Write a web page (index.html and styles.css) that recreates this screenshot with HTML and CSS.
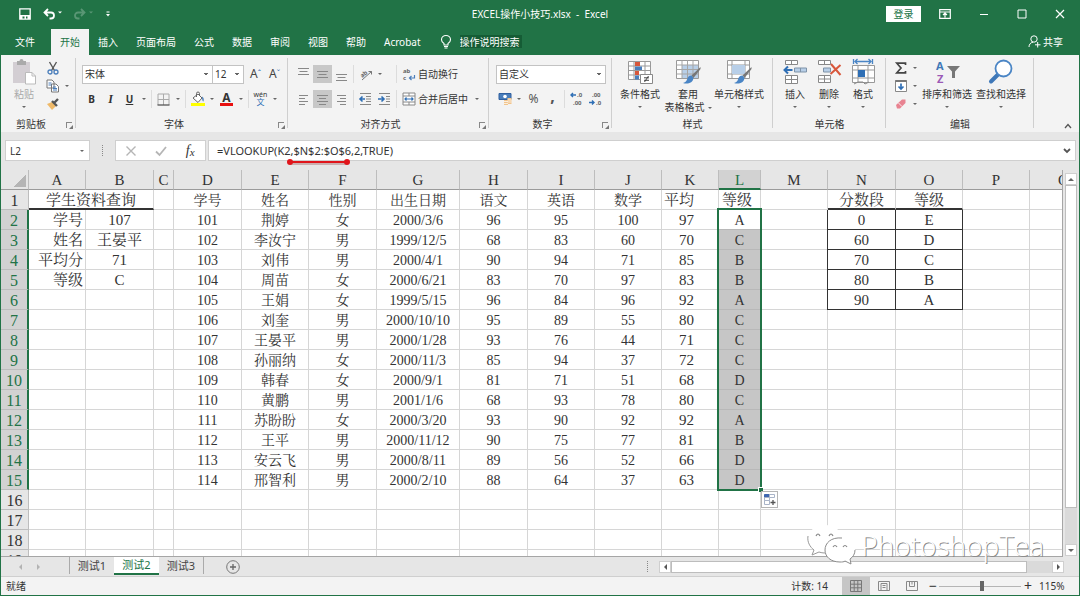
FILE: index.html
```html
<!DOCTYPE html>
<html lang="zh-CN">
<head>
<meta charset="utf-8">
<title>EXCEL操作小技巧.xlsx - Excel</title>
<link rel="stylesheet" href="styles.css">
</head>
<body>
<div class="app">
  <header class="titlebar">
    <div class="quick">
      <button aria-label="保存"><svg width="12" height="12" viewBox="0 0 12 12"><path d="M.8.8h10.4v10.4H.8z" fill="none" stroke="#fff" stroke-width="1.3"/><path d="M1 7h10v4H8.500V8.500H7V11H5.500V8.500H3.500V11H1z" fill="#fff"/></svg></button>
      <button aria-label="撤消"><svg width="18" height="12" viewBox="0 0 18 12"><path d="M5 1L1.500 4.500 5 8M2 4.500h6a3 3 0 0 1 0 6H6.500" fill="none" stroke="#fff" stroke-width="1.800"/><path d="M15 3.500h4l-2 2z" fill="#fff"/></svg></button>
      <button aria-label="恢复" class="dim"><svg width="20" height="12" viewBox="0 0 20 12"><path d="M8 1l3.500 3.500L8 8M11 4.500H5a3 3 0 0 0 0 6h1.500" fill="none" stroke="#fff" stroke-width="1.800"/><path d="M16 3.500h4l-2 2z" fill="#fff"/></svg></button>
      <button aria-label="自定义快速访问工具栏"><svg width="6" height="8" viewBox="0 0 6 8"><path d="M1.500 2h3" stroke="#fff"/><path d="M1 4h4L3 6.500z" fill="#fff"/></svg></button>
    </div>
    <h1>EXCEL操作小技巧.xlsx&nbsp; -&nbsp; Excel</h1>
    <div class="window">
      <button class="login">登录</button>
      <button aria-label="功能区显示选项"><svg width="12" height="10" viewBox="0 0 12 10"><path d="M.7.7h10.600v8.600H.7zM.7 3h10.600M6 8.500V4.500M4 6l2-2 2 2" fill="none" stroke="#fff" stroke-width="1.200"/></svg></button>
      <button aria-label="最小化"><svg width="10" height="10" viewBox="0 0 10 10"><path d="M1 5.500h8" stroke="#fff"/></svg></button>
      <button aria-label="最大化"><svg width="10" height="10" viewBox="0 0 10 10"><path d="M1 1h8v8H1z" fill="none" stroke="#fff"/></svg></button>
      <button aria-label="关闭"><svg width="10" height="10" viewBox="0 0 10 10"><path d="M1 1l8 8M9 1L1 9" stroke="#fff" stroke-width="1.200"/></svg></button>
    </div>
  </header>
  <nav class="tabs">
    <button class="file">文件</button><button class="on">开始</button><button>插入</button><button>页面布局</button><button>公式</button><button>数据</button><button>审阅</button><button>视图</button><button>帮助</button><button>Acrobat</button>
    <label class="tell"><svg width="12" height="14" viewBox="0 0 12 14"><path d="M4 10V8.500C2.500 7.500 1.500 6.500 1.500 4.800a4.500 4.300 0 0 1 9 0C10.500 6.500 9.500 7.500 8 8.500V10zM4 11.500h4M4.500 13h3" fill="none" stroke="#fff" stroke-width="1.100"/></svg><input value="操作说明搜索" aria-label="操作说明搜索"></label>
    <button class="share"><svg width="13" height="13" viewBox="0 0 13 13"><circle cx="6" cy="4" r="3.200" fill="none" stroke="#fff"/><path d="M1 12c0-2.500 1.500-4.500 4-4.800M7 9.800h5.500M9.700 7v5.500" fill="none" stroke="#fff"/></svg>共享</button>
  </nav>

  <section class="ribbon">
    <div class="group g-clip">
      <div class="body">
        <button class="big off"><svg width="26" height="26" viewBox="0 0 26 26"><path d="M2 3h17v21H2z" fill="#d3ced3"/><path d="M6 2h2.500a2 2 0 0 1 4 0H15v4H6z" fill="#aaa"/><path d="M14.500 13.500H21l3.500 3.500v8h-10z" fill="#fff" stroke="#bbb"/><path d="M21 13.500V17h3.500" fill="none" stroke="#bbb"/></svg><span>粘贴</span><i class="car"></i></button>
        <div class="stack">
          <div class="row"><button class="ib" aria-label="剪切"><svg width="14" height="14" viewBox="0 0 14 14"><path d="M3.500 1l5 8.500M10.500 1l-5 8.500" stroke="#555" stroke-width="1.400"/><circle cx="4" cy="11" r="2" fill="none" stroke="#4a7ebb" stroke-width="1.300"/><circle cx="10" cy="11" r="2" fill="none" stroke="#4a7ebb" stroke-width="1.300"/></svg></button></div>
          <div class="row"><button class="ib" aria-label="复制"><svg width="14" height="14" viewBox="0 0 14 14"><path d="M1 1h5l2 2v6H1zM5.500 5H10l2.500 2.500V13h-7z" fill="#fff" stroke="#777"/><path d="M2.500 4h3M2.500 6h3M7 8h3M7 9.500h4M7 11h4" stroke="#4a7ebb"/></svg></button><button class="dd" aria-label="复制选项"><i class="car"></i></button></div>
          <div class="row"><button class="ib" aria-label="格式刷"><svg width="14" height="14" viewBox="0 0 14 14"><path d="M1 7l5-2 4 4-4 4z" fill="#efb968"/><path d="M6 4l5 5M8.500 5.500L12 2" stroke="#555" stroke-width="2.400"/></svg></button></div>
        </div>
      </div>
      <div class="name">剪贴板<button class="launch" aria-label="剪贴板选项"></button></div>
    </div>

    <div class="group g-font">
      <div class="body rows">
        <div class="row"><select class="sel wide" aria-label="字体"><option>宋体</option></select><select class="sel size" aria-label="字号"><option>12</option></select><button class="ib grow" aria-label="增大字号">A<sup>ˆ</sup></button><button class="ib grow" aria-label="减小字号">A<sup>ˇ</sup></button></div>
        <div class="row"><button class="ib b">B</button><button class="ib it">I</button><button class="ib u">U</button><button class="dd" aria-label="下划线选项"><i class="car"></i></button><i class="sep"></i>
          <button class="ib" aria-label="边框"><svg width="13" height="13" viewBox="0 0 13 13"><path d="M1 1h11v11M1 1v11M6.500 1v11M1 6.500h11" fill="none" stroke="#aaa"/><path d="M.5 12h12" stroke="#555" stroke-width="1.300"/></svg></button><button class="dd" aria-label="边框选项"><i class="car"></i></button><i class="sep"></i>
          <button class="ib" aria-label="填充颜色"><svg width="14" height="14" viewBox="0 0 14 14"><path d="M2 6l5-4 4 4-4 4.500z" fill="#fff" stroke="#666"/><path d="M5.500 5V1.500a1.500 1.500 0 0 1 3 0V4" fill="none" stroke="#666"/><path d="M11 4.500c2 1 2 3 1.500 5-1 0-1.500-2-1.500-5z" fill="#4a7ebb"/><path d="M0 11h14v3H0z" fill="#ffff00"/></svg></button><button class="dd" aria-label="填充颜色选项"><i class="car"></i></button>
          <button class="ib fc" aria-label="字体颜色">A</button><button class="dd" aria-label="字体颜色选项"><i class="car"></i></button><i class="sep"></i>
          <button class="ib wen" aria-label="显示拼音"><span>wén</span><b>文</b></button><button class="dd" aria-label="拼音选项"><i class="car"></i></button></div>
      </div>
      <div class="name">字体<button class="launch" aria-label="字体选项"></button></div>
    </div>

    <div class="group g-align">
      <div class="body rows">
        <div class="row">
          <button class="ib" aria-label="顶端对齐"><svg class="ln" width="13" height="13" viewBox="0 0 13 13"><path d="M1 .5h11M2.500 3.500h8M1 6.500h11"/></svg></button><button class="ib sel-on" aria-label="垂直居中"><svg class="ln" width="13" height="13" viewBox="0 0 13 13"><path d="M1 3.500h11M2.500 6.500h8M1 9.500h11"/></svg></button><button class="ib" aria-label="底端对齐"><svg class="ln" width="13" height="13" viewBox="0 0 13 13"><path d="M1 6.500h11M2.500 9.500h8M1 12.500h11"/></svg></button><i class="sep"></i>
          <span class="pair"><button class="ib" aria-label="方向"><svg width="14" height="14" viewBox="0 0 14 14"><path d="M3 13L12.500 4.500M12.500 4.500H9.500M12.500 4.500v3" fill="none" stroke="#777"/><text x="1" y="9" class="ab" transform="rotate(-40 5 7)">ab</text></svg></button><button class="dd" aria-label="方向选项"><i class="car"></i></button></span><i class="sep"></i>
          <button class="txt"><svg width="14" height="14" viewBox="0 0 14 14"><text x="1" y="6" class="ab">ab</text><text x="1" y="13" class="ab">c</text><path d="M12.500 8v3H7.500M9.500 9l-2 2 2 2" fill="none" stroke="#4a7ebb" stroke-width="1.200"/></svg>自动换行</button>
        </div>
        <div class="row">
          <button class="ib" aria-label="左对齐"><svg class="ln" width="11" height="11" viewBox="0 0 11 11"><path d="M1 1.500h9M1 4.500h6M1 7.500h9M1 10.500h6"/></svg></button><button class="ib sel-on" aria-label="居中"><svg class="ln" width="11" height="11" viewBox="0 0 11 11"><path d="M0 1.500h11M2 4.500h7M0 7.500h11M2 10.500h7"/></svg></button><button class="ib" aria-label="右对齐"><svg class="ln" width="11" height="11" viewBox="0 0 11 11"><path d="M1 1.500h9M4 4.500h6M1 7.500h9M4 10.500h6"/></svg></button><i class="sep"></i>
          <span class="pair"><button class="ib" aria-label="减少缩进"><svg width="13" height="12" viewBox="0 0 13 12"><path d="M1 .5h11M7 3.500h5M7 6h5M7 8.500h5M1 11.500h11" stroke="#888"/><path d="M6 6H1M3.500 3.500L1 6l2.500 2.500" fill="none" stroke="#2f6fb5" stroke-width="1.600"/></svg></button><button class="ib" aria-label="增加缩进"><svg width="13" height="12" viewBox="0 0 13 12"><path d="M1 .5h11M8 3.500h4M8 6h4M8 8.500h4M1 11.500h11" stroke="#888"/><path d="M0 6h6M3.500 3.500L6 6 3.500 8.500" fill="none" stroke="#2f6fb5" stroke-width="1.600"/></svg></button></span><i class="sep"></i>
          <button class="txt"><svg width="14" height="14" viewBox="0 0 14 14"><path d="M1 1h12v12H1zM1 4h12M1 10h12M7 1v3M7 10v3" fill="#fff" stroke="#888"/><path d="M3 7h8M4.500 5.500L3 7l1.500 1.500M9.500 5.500L11 7 9.500 8.500" fill="none" stroke="#2f6fb5" stroke-width="1.200"/></svg>合并后居中</button><button class="dd last" aria-label="合并选项"><i class="car"></i></button>
        </div>
      </div>
      <div class="name">对齐方式<button class="launch" aria-label="对齐选项"></button></div>
    </div>

    <div class="group g-num">
      <div class="body rows">
        <div class="row"><select class="sel fmt" aria-label="数字格式"><option>自定义</option></select></div>
        <div class="row"><button class="ib" aria-label="会计数字格式"><svg width="14" height="14" viewBox="0 0 14 14"><path d="M1 1.500h12v6H1z" fill="#4a7ebb" stroke="#2f5f9f"/><circle cx="7" cy="4.500" r="1.800" fill="#fff"/><path d="M6 8h4v5H6zM9.500 6h4v6h-4z" fill="#f1c48b"/><path d="M6 9.500h4M6 11.500h4M9.500 8h4M9.500 10h4" stroke="#fff" stroke-width=".7"/></svg></button><button class="dd" aria-label="货币选项"><i class="car"></i></button><button class="ib pct">%</button><button class="ib comma">,</button><i class="sep"></i>
          <button class="ib" aria-label="增加小数位数"><svg width="13" height="14" viewBox="0 0 13 14"><path d="M6 3H1M3 1L1 3l2 2" fill="none" stroke="#2f6fb5" stroke-width="1.400"/><text x="7" y="5" class="ab">.0</text><text x="3" y="13" class="ab">.00</text></svg></button><button class="ib" aria-label="减少小数位数"><svg width="13" height="14" viewBox="0 0 13 14"><path d="M0 10.500h5M3 8.500l2 2-2 2" fill="none" stroke="#2f6fb5" stroke-width="1.400"/><text x="3" y="5" class="ab">.00</text><text x="7" y="13" class="ab">.0</text></svg></button></div>
      </div>
      <div class="name">数字<button class="launch" aria-label="数字选项"></button></div>
    </div>

    <div class="group g-style">
      <div class="body">
        <button class="big"><svg width="26" height="26" viewBox="0 0 26 26"><path d="M1.500 2.500h22v18h-22zM1.500 7h22M1.500 11.500h22M1.500 16h22M7 2.500v18M18 2.500v18" fill="#fff" stroke="#999"/><path d="M8 3h5v4H8zM8 12h4v4H8z" fill="#d8573b"/><path d="M8 7.500h7V11H8zM8 16.500h4v4H8z" fill="#4a7ebb"/><path d="M13.500 15.500h12v9h-12z" fill="#fff" stroke="#888"/><path d="M17 18.800h5M17 21.300h5M21.500 17l-4 6" stroke="#444"/></svg><span>条件格式</span><i class="car"></i></button>
        <button class="big"><svg width="26" height="26" viewBox="0 0 26 26"><path d="M1.500 1.500h22v18h-22z" fill="#fff" stroke="#999"/><path d="M7 6h16v13H7z" fill="#b8cfe8"/><path d="M1.500 6h22M1.500 10.500h22M1.500 15h22M7 1.500v18M12.500 1.500v18M18 1.500v18" stroke="#a5a5a5"/><path d="M25.500 8l-9 8.500 2 2.500 7-9z" fill="#777"/><path d="M16.500 16.500c-3 0-4 2-4.500 4-.5 2-2 3-4 3.500 4.500 1.500 10 0 10.500-5z" fill="#4a85c5"/></svg><span>套用<br>表格格式<i class="car"></i></span></button>
        <button class="big"><svg width="26" height="26" viewBox="0 0 26 26"><path d="M1.500 1.500h22v18h-22zM1.500 6h22M1.500 15h22M6 1.500v18M19 1.500v18" fill="#fff" stroke="#999"/><path d="M6 6h13v9H6z" fill="#b8cfe8"/><path d="M25.500 8l-9 8.500 2 2.500 7-9z" fill="#777"/><path d="M16.500 16.500c-3 0-4 2-4.500 4-.5 2-2 3-4 3.500 4.500 1.500 10 0 10.500-5z" fill="#4a85c5"/></svg><span>单元格样式</span><i class="car"></i></button>
      </div>
      <div class="name">样式</div>
    </div>

    <div class="group g-cell">
      <div class="body">
        <button class="big"><svg width="26" height="26" viewBox="0 0 26 26"><path d="M3.500 1.500h12v4h-12zM9.500 1.500v4M3.500 16.500h12v8h-12zM3.500 20.500h12M9.500 16.500v8" fill="#fff" stroke="#888"/><path d="M12.500 9h12v4h-12zM18.500 9v4" fill="#b8cfe8" stroke="#7f93a8"/><path d="M10.500 11H2.500M6 7.500L2.500 11 6 14.500" fill="none" stroke="#2f6fb5" stroke-width="2"/></svg><span>插入</span><i class="car"></i></button>
        <button class="big"><svg width="26" height="26" viewBox="0 0 26 26"><path d="M2.500 1.500h12v4h-12zM8.500 1.500v4M2.500 16.500h12v7h-12zM2.500 20h12M8.500 16.500v7" fill="#fff" stroke="#888"/><path d="M7.500 9h7v4h-7z" fill="#b8cfe8" stroke="#7f93a8"/><path d="M15 5l9.500 11M24.500 6L14.500 15" stroke="#d8573b" stroke-width="2"/></svg><span>删除</span><i class="car"></i></button>
        <button class="big"><svg width="26" height="26" viewBox="0 0 26 26"><path d="M2.500 6.500h22v17h-22zM2.500 11h22M2.500 19h22M8 6.500v17M18 6.500v17" fill="#fff" stroke="#999"/><path d="M8 11h7v7H8z" fill="#2f6fb5"/><path d="M5 2.500h16M7.500 0L5 2.500 7.500 5M18.500 0L21 2.500 18.500 5M3.500 0v5M22.500 0v5" fill="none" stroke="#4a85c5" stroke-width="1.300"/><path d="M4 25l4-2h5l2 2 4-2" fill="none" stroke="#888"/></svg><span>格式</span><i class="car"></i></button>
      </div>
      <div class="name">单元格</div>
    </div>

    <div class="group g-edit">
      <div class="body">
        <div class="stack">
          <div class="row"><button class="ib" aria-label="自动求和"><svg width="12" height="12" viewBox="0 0 12 12"><path d="M10.500 3V1.200H1.800L6 6l-4.200 4.800h8.700V9" fill="none" stroke="#444" stroke-width="1.700"/></svg></button><button class="dd" aria-label="求和选项"><i class="car"></i></button></div>
          <div class="row"><button class="ib" aria-label="填充"><svg width="12" height="12" viewBox="0 0 12 12"><path d="M.5.5h11v11H.5z" fill="#fff" stroke="#888"/><path d="M.5 1h11" stroke="#777" stroke-width="2"/><path d="M6 3.500V9M3.500 6.500L6 9l2.500-2.500" fill="none" stroke="#2f6fb5" stroke-width="1.700"/></svg></button><button class="dd" aria-label="填充选项"><i class="car"></i></button></div>
          <div class="row"><button class="ib" aria-label="清除"><svg width="12" height="12" viewBox="0 0 12 12"><path d="M1 7l6-5.500h3.500v3.500L5 10.500H2z" fill="#e88391"/><path d="M3.500 5l3.500 3.500" stroke="#fff" stroke-width=".8"/></svg></button><button class="dd" aria-label="清除选项"><i class="car"></i></button></div>
        </div>
        <button class="big"><svg width="26" height="26" viewBox="0 0 26 26"><text x="2" y="11" class="az a">A</text><text x="3" y="24" class="az z">Z</text><path d="M13 7h13l-5 5.500V19h-3v-6.500z" fill="#777"/></svg><span>排序和筛选</span><i class="car"></i></button>
        <button class="big"><svg width="26" height="26" viewBox="0 0 26 26"><path d="M10.500 15L3 22.500" stroke="#3f78b8" stroke-width="4" stroke-linecap="round"/><circle cx="15.500" cy="9.500" r="8" fill="#fff" stroke="#4a85c5" stroke-width="1.800"/></svg><span>查找和选择</span><i class="car"></i></button>
      </div>
      <div class="name">编辑</div>
    </div>
    <button class="collapse" aria-label="折叠功能区"><svg width="8" height="6" viewBox="0 0 8 6"><path d="M1 5l3-3.500L7 5" fill="none" stroke="#555" stroke-width="1.300"/></svg></button>
  </section>

  <section class="formula">
    <label class="namebox"><input value="L2" aria-label="名称框"><i class="car"></i></label>
    <i class="grip"></i>
    <div class="fxbox"><button aria-label="取消"><svg width="12" height="12" viewBox="0 0 12 12"><path d="M1.500 1.500l9 9M10.500 1.500l-9 9" stroke="#b5b5b5" stroke-width="1.400"/></svg></button><button aria-label="输入"><svg width="12" height="12" viewBox="0 0 12 12"><path d="M1 6.500L4.500 10 11 2" fill="none" stroke="#b5b5b5" stroke-width="1.800"/></svg></button><button class="fx" aria-label="插入函数">f<small>x</small></button></div>
    <label class="fbox"><input value="=VLOOKUP(K2,$N$2:$O$6,2,TRUE)" aria-label="编辑栏"><svg width="8" height="6" viewBox="0 0 8 6"><path d="M1 1l3 3 3-3" fill="none" stroke="#555" stroke-width="1.800"/></svg></label>
    <svg class="mark" width="66" height="12" viewBox="0 0 66 12"><path d="M4 7h57" stroke="#9a4a4a" stroke-width="2" opacity=".35"/><path d="M4 5h57" stroke="#e0151b" stroke-width="2"/><circle cx="4" cy="5" r="3" fill="#e0151b"/><circle cx="61" cy="5" r="3" fill="#e0151b"/></svg>
  </section>

  <main class="sheet">
    <div class="grid">
      <table>
        <colgroup><col class="c28"><col class="c57"><col class="c68"><col class="c20"><col class="c68"><col class="c67"><col class="c68"><col class="c83"><col class="c68"><col class="c67"><col class="c67"><col class="c57"><col class="c42"><col class="c67"><col class="c68"><col class="c67"><col class="c67"><col></colgroup>
        <thead><tr><th class="corner"><th>A<th>B<th>C<th>D<th>E<th>F<th>G<th>H<th>I<th>J<th>K<th class="hot">L<th>M<th>N<th>O<th>P<th>Q</tr></thead>
        <tbody>
        <tr><th>1<td colspan="2" class="lg heavy">学生资料查询<td><td>学号<td>姓名<td>性别<td>出生日期<td>语文<td>英语<td>数学<td class="k">平均<td class="l1">等级<td><td class="lg n1">分数段<td class="lg n1">等级<td><td></tr>
        <tr class="s"><th>2<td class="r">学号<td class="lg">107<td><td>101<td>荆婷<td>女<td>2000/3/6<td>96<td>95<td>100<td class="k">97<td class="l first">A<span class="range"></span><td><td class="n">0<td class="n">E<td><td></tr>
        <tr class="s"><th>3<td class="r">姓名<td class="lg">王晏平<td><td>102<td>李汝宁<td>男<td>1999/12/5<td>68<td>83<td>60<td class="k">70<td class="l">C<td><td class="n">60<td class="n">D<td><td></tr>
        <tr class="s"><th>4<td class="r">平均分<td class="lg">71<td><td>103<td>刘伟<td>男<td>2000/4/1<td>90<td>94<td>71<td class="k">85<td class="l">B<td><td class="n">70<td class="n">C<td><td></tr>
        <tr class="s"><th>5<td class="r">等级<td class="lg">C<td><td>104<td>周苗<td>女<td>2000/6/21<td>83<td>70<td>97<td class="k">83<td class="l">B<td><td class="n">80<td class="n">B<td><td></tr>
        <tr class="s"><th>6<td><td><td><td>105<td>王娟<td>女<td>1999/5/15<td>96<td>84<td>96<td class="k">92<td class="l">A<td><td class="n">90<td class="n">A<td><td></tr>
        <tr class="s"><th>7<td><td><td><td>106<td>刘奎<td>男<td>2000/10/10<td>95<td>89<td>55<td class="k">80<td class="l">C<td><td><td><td><td></tr>
        <tr class="s"><th>8<td><td><td><td>107<td>王晏平<td>男<td>2000/1/28<td>93<td>76<td>44<td class="k">71<td class="l">C<td><td><td><td><td></tr>
        <tr class="s"><th>9<td><td><td><td>108<td>孙丽纳<td>女<td>2000/11/3<td>85<td>94<td>37<td class="k">72<td class="l">C<td><td><td><td><td></tr>
        <tr class="s"><th>10<td><td><td><td>109<td>韩春<td>女<td>2000/9/1<td>81<td>71<td>51<td class="k">68<td class="l">D<td><td><td><td><td></tr>
        <tr class="s"><th>11<td><td><td><td>110<td>黄鹏<td>男<td>2001/1/6<td>68<td>93<td>78<td class="k">80<td class="l">C<td><td><td><td><td></tr>
        <tr class="s"><th>12<td><td><td><td>111<td>苏盼盼<td>女<td>2000/3/20<td>93<td>90<td>92<td class="k">92<td class="l">A<td><td><td><td><td></tr>
        <tr class="s"><th>13<td><td><td><td>112<td>王平<td>男<td>2000/11/12<td>90<td>75<td>77<td class="k">81<td class="l">B<td><td><td><td><td></tr>
        <tr class="s"><th>14<td><td><td><td>113<td>安云飞<td>男<td>2000/8/11<td>89<td>56<td>52<td class="k">66<td class="l">D<td><td><td><td><td></tr>
        <tr class="s"><th>15<td><td><td><td>114<td>邢智利<td>男<td>2000/2/10<td>88<td>64<td>37<td class="k">63<td class="l">D<button class="autofill" aria-label="自动填充选项"><svg width="12" height="12" viewBox="0 0 12 12"><path d="M.5.5h5v3h-5z" fill="#3f66b0" stroke="#3f66b0"/><path d="M5.500.5h5v3h-5zM.5 3.500h5v3h-5zM.5 6.500h5v4h-5z" fill="#fff" stroke="#a9b4c8"/><path d="M9 6v5M6.500 8.500h5" stroke="#555" stroke-width="1.300"/></svg></button><td><td><td><td><td></tr>
        <tr><th>16<td><td><td><td><td><td><td><td><td><td><td><td><td><td><td><td><td></tr>
        <tr><th>17<td><td><td><td><td><td><td><td><td><td><td><td><td><td><td><td><td></tr>
        <tr><th>18<td><td><td><td><td><td><td><td><td><td><td><td><td><td><td><td><td></tr>
        <tr><th>19<td><td><td><td><td><td><td><td><td><td><td><td><td><td><td><td><td></tr>
        </tbody>
      </table>
    </div>
    <div class="vscroll"><button aria-label="向上滚动"><i class="tri up"></i></button><div class="thumb"></div><div class="track"></div><button aria-label="向下滚动"><i class="tri down"></i></button></div>
    <div class="watermark">
      <svg width="50" height="42" viewBox="0 0 50 42"><path d="M18 1C8 1 1 7 1 15c0 5 3 8 6 11l-2 5 7-3c3 1 6 1 9 1 12-2 15-8 14-15C34 6 27 1 18 1z" fill="#fff"/><path d="M1 12c-1 6 2 11 6 14l-2 5 7-3c3 1 5 1 8 1" fill="none" stroke="#999"/><path d="M33 14c-9 0-15 5-15 12s6 12 15 12c2 0 4 0 5-1l6 3-1-5c3-2 5-5 5-9 0-7-6-12-15-12z" fill="#fff"/><path d="M35 14c-11-1-17 5-17 12s6 12 15 12c2 0 4 0 5-1l6 3-1-5c3-2 5-5 5-9" fill="none" stroke="#8c8c8c"/><path d="M9 12q2-4 4 0M22 12q2-4 4 0M26 23q2-3 4 0M36 23q2-3 4 0" fill="none" stroke="#888" stroke-width="1.200"/></svg>
      <span>PhotoshopTea</span>
    </div>
  </main>

  <nav class="sheets">
    <div class="arrows"><button aria-label="上一张"><i class="tri left"></i></button><button aria-label="下一张"><i class="tri right"></i></button></div>
    <button class="tab first">测试1</button><button class="tab cur">测试2</button><button class="tab third">测试3</button>
    <button class="add" aria-label="新工作表"><svg width="14" height="14" viewBox="0 0 14 14"><circle cx="7" cy="7" r="6.300" fill="none" stroke="#777"/><path d="M7 4v6M4 7h6" stroke="#666" stroke-width="1.300"/></svg></button>
    <div class="hscroll"><i class="grip"></i><button aria-label="向左滚动"><i class="tri left"></i></button><div class="thumb"></div><div class="track"></div><button aria-label="向右滚动"><i class="tri right"></i></button></div>
  </nav>

  <footer class="status">
    <span>就绪</span>
    <span class="count">计数: 14</span>
    <button class="view on" aria-label="普通"><svg width="12" height="12" viewBox="0 0 12 12"><path d="M.5.5h11v11H.5zM.5 4.200h11M.5 7.800h11M4.200.5v11M7.800.5v11" fill="none" stroke="#777"/></svg></button><button class="view" aria-label="页面布局"><svg width="12" height="12" viewBox="0 0 12 12"><path d="M.5 1.500h11v9H.5zM3 3.500h6v7H3zM4.500 5.500h3M4.500 7.500h3" fill="none" stroke="#888"/></svg></button><button class="view" aria-label="分页预览"><svg width="12" height="12" viewBox="0 0 12 12"><path d="M.5 1.500h11v9H.5zM3.500 1.500v5h5v-5M6 1.500v3" fill="none" stroke="#888"/></svg></button>
    <button class="zoom" aria-label="缩小">−</button><input type="range" min="0" max="100" value="53" aria-label="显示比例"><button class="zoom" aria-label="放大">+</button><span class="pc">115%</span>
  </footer>
</div>
</body>
</html>
```

FILE: styles.css
```css
* { box-sizing: border-box; }
body {
  margin: 0;
  font: 10px/14px "Noto Sans", "Noto Sans CJK SC", sans-serif;
  color: #333;
}
button, input, select { font: inherit; color: inherit; border: 0; padding: 0; margin: 0; background: none; border-radius: 0; min-width: 0; }
button { display: flex; align-items: center; justify-content: center; white-space: nowrap; }
svg { display: block; flex: none; overflow: visible; }
i { font-style: normal; }
.app {
  display: flex;
  flex-direction: column;
  height: 100vh;
  background: #e6e6e6;
  border: 1px solid #217346;
  border-top: 0;
  overflow: hidden;
}

/* title bar */
.titlebar {
  display: grid;
  grid-template-columns: 1fr auto 1fr;
  align-items: center;
  height: 28px;
  background: #217346;
  color: #fff;
}
.titlebar h1 { margin: 0; font-size: 10px; font-weight: 400; }
.quick { display: flex; align-items: center; gap: 12px; padding-left: 18px; }
.dim { opacity: .25; }
.window { display: flex; align-items: center; justify-content: flex-end; gap: 28px; padding-right: 14px; }
.login { width: 35px; height: 16px; background: #fff; color: #217346; margin-right: -10px; }

.tabs { display: flex; height: 27px; background: #217346; color: #fff; }
.tabs button { padding: 0 9px; }
.tabs .file { margin: 0 7px 0 5px; }
.tabs .on { background: #f3f3f3; color: #217346; margin-top: 1px; }
.tell { display: flex; align-items: center; gap: 8px; padding-left: 10px; }
.tell input { width: 62px; height: 13px; background: #155c35; color: #fff; }
.tabs .share { margin-left: auto; gap: 2px; padding-right: 16px; }

/* ribbon */
.ribbon { display: flex; height: 77px; background: #f3f3f3; }
.group { display: flex; flex-direction: column; position: relative; flex: none; }
.group::after { content: ""; position: absolute; right: 0; top: 3px; bottom: 4px; width: 1px; background: #cfcfcf; }
.body { display: flex; height: 61px; padding-top: 4px; }
.body.rows { flex-direction: column; padding: 7px 0 0 6px; gap: 1px; }
.row { display: flex; align-items: center; height: 24px; }
.stack { display: flex; flex-direction: column; }
.stack .row { height: 18px; }
.name { position: relative; text-align: center; line-height: 16px; }
.launch { position: absolute; right: 4px; top: 6px; width: 6px; height: 6px; border: 1px solid #888; border-right: 0; border-bottom: 0; }
.launch::after { content: ""; position: absolute; right: -1px; bottom: -1px; border: 2px solid #777; border-left-color: transparent; border-top-color: transparent; }
.g-clip { width: 75px; }
.g-font { width: 212px; }
.g-align { width: 201px; }
.g-align .name, .g-num .name { padding-right: 16px; }
.g-font .name { padding-right: 16px; }
.g-clip .name { padding-right: 15px; }
.g-num { width: 123px; }
.g-style { width: 161px; }
.g-cell { width: 113px; }
.g-edit { width: 148px; }
.car { display: inline-block; flex: none; border: 2px solid transparent; border-top-color: #666; border-bottom: 0; vertical-align: middle; }
.ib { width: 19px; height: 18px; flex: none; }
.dd { width: 10px; height: 18px; flex: none; }
.sep { width: 1px; height: 18px; margin: 0 2px; background: #dcdcdc; flex: none; }
.sel-on { background: #c8c8c8; }
.pair { display: flex; width: 38px; }
.txt { gap: 2px; padding-left: 3px; }
.last { margin-left: 4px; }
.ln { stroke: #888; fill: none; }
.ab { font: bold 6px "Noto Sans", sans-serif; fill: #666; }
.az { font: bold 11px "Noto Sans", sans-serif; }
.az.a { fill: #3f78b8; }
.az.z { fill: #9b59b6; }
.sel {
  height: 19px;
  border: 1px solid #c3c3c3;
  padding-left: 2px;
  appearance: none;
  background: linear-gradient(#666, #666) right 5px top 8px / 2px 1px no-repeat, linear-gradient(#666, #666) right 4px top 7px / 4px 1px no-repeat, #fff;
}
.wide { width: 131px; }
.size { width: 32px; margin-left: -1px; }
.fmt { width: 110px; margin-left: 1px; }
.grow { font-size: 12px; color: #444; }
.size + .grow { margin-left: 2px; }
.grow sup { font-size: 8px; line-height: 8px; color: #2f6fb5; }
.b { font-weight: 700; }
.it { font-style: italic; font-weight: 700; font-family: "Liberation Serif", serif; font-size: 12px; }
.u { text-decoration: underline; font-weight: 700; }
.fc { font-size: 12px; font-weight: 700; line-height: 11px; }
.ib.fc { width: 13px; height: 14px; margin: 0 3px; border-bottom: 3px solid #e81010; }
.wen { flex-direction: column; font-size: 7px; line-height: 6px; }
.wen b { font-size: 8px; line-height: 8px; color: #2f6fb5; font-weight: 400; }
.pct { font-size: 12px; color: #555; }
.comma { font-size: 16px; font-weight: 700; line-height: 8px; padding-bottom: 6px; color: #555; }
.big { flex-direction: column; justify-content: flex-start; line-height: 13px; }
.big span { margin-top: 3px; }
.big > .car { margin-top: 5px; }
.big span .car { margin-left: 3px; }
.off { color: #aaa; width: 38px; margin-left: 4px; }
.g-style .body { padding-left: 4px; }
.g-style .big { width: 48px; }
.g-style .big:last-child { width: 54px; }
.g-cell .body { padding-left: 5px; }
.g-cell .big { width: 34px; }
.g-edit .body { padding-left: 5px; }
.g-edit .big { width: 54px; }
.g-edit .stack { width: 29px; }
.collapse { margin: auto 7px 3px auto; }

/* formula bar */
.formula { display: flex; position: relative; height: 38px; padding: 8px 3px 9px 4px; }
.formula > label, .fxbox { display: flex; align-items: center; background: #fff; border: 1px solid #cfcfcf; height: 21px; }
.formula input { flex: 1; width: 0; }
.namebox { width: 85px; padding: 0 5px 0 4px; }
.grip { width: 1px; height: 11px; margin: 5px 12px; border-left: 1px dotted #888; }
.fxbox { width: 91px; margin-right: 2px; }
.fxbox button { flex: 1; }
.fx { font: italic 14px "Liberation Serif", serif; }
.fx small { font-size: 11px; padding-top: 3px; }
.fbox { flex: 1; padding: 0 4px 0 8px; font-size: 11px; }
.mark { position: absolute; left: 285px; top: 25px; }

/* grid */
.sheet { flex: 1; display: flex; min-height: 0; position: relative; }
.grid { flex: 1; overflow: hidden; border-right: 1px solid #a6a6a6; border-bottom: 1px solid #a6a6a6; }
table { width: calc(100% + 36px); table-layout: fixed; border-collapse: separate; border-spacing: 0; background: #fff; font: 14px/17px "Liberation Serif", "Noto Serif CJK SC", "Noto Sans CJK SC", serif; color: #333; }
.c20 { width: 20px; } .c28 { width: 28px; } .c42 { width: 42px; } .c57 { width: 57px; }
.c67 { width: 67px; } .c68 { width: 68px; } .c83 { width: 83px; }
td, th { height: 20px; padding: 2px 0 0; text-align: center; white-space: nowrap; border: 0 solid #d6d6d6; border-width: 0 1px 1px 0; font-weight: 400; line-height: 17px; }
th { background: #e6e6e6; font-size: 16px; border-color: #bdbdbd; }
thead th { font-size: 15px; border-bottom-color: #9b9b9b; }
.corner { background: linear-gradient(135deg, transparent 50%, #b5b5b5 50%) right 2px bottom 2px / 13px 13px no-repeat #e6e6e6; }
thead .hot { background: #d2d2d2; color: #217346; border-bottom: 2px solid #217346; line-height: 16px; }
.s th { background: #d2d2d2; color: #217346; border-right: 2px solid #217346; }
.lg, .r, .k, .l, .l1, .n { font-size: 15px; }
.r { text-align: right; padding-right: 2px; }
.k { text-align: right; padding-right: 24px; }
.l1 { text-align: left; padding-left: 3px; }
.heavy { border-bottom: 2px solid #333; line-height: 16px; }
.l { background: #c6c6c6; border-bottom-color: #b8b8b8; position: relative; font-size: 14px; }
.l.first { background: #fff; }
.n, .n1 { border-color: #333; }
.n1 { border-right-color: #d6d6d6; border-bottom-width: 2px; line-height: 16px; }
.n:has(+ .n) { box-shadow: -1px 0 #333; }
.range { position: absolute; left: -2px; top: -2px; width: 45px; height: 283px; border: 2px solid #217346; z-index: 1; }
.range::after { content: ""; position: absolute; right: -3px; bottom: -3px; width: 4px; height: 4px; background: #217346; border: 1px solid #fff; box-sizing: content-box; border-right: 0; border-bottom: 0; }
.autofill { position: absolute; left: 42px; top: 21px; width: 17px; height: 17px; background: #fff; border: 1px solid #b5b5b5; z-index: 2; }
.vscroll { width: 16px; padding: 3px 1px 1px 2px; display: flex; flex-direction: column; }
.vscroll button, .hscroll button { width: 12px; height: 12px; background: #fff; border: 1px solid #cfcfcf; flex: none; }
.vscroll .thumb { flex: 9; width: 12px; background: #fff; border: 1px solid #bdbdbd; }
.vscroll .track { flex: 1; width: 12px; background: #dadada; }
.tri { border: 3px solid transparent; }
.up { border-top: 0; border-bottom-color: #666; }
.down { border-bottom: 0; border-top-color: #666; }
.left { border-left: 0; border-right-color: #555; }
.right { border-right: 0; border-left-color: #555; }
.watermark { position: absolute; right: 35px; bottom: -9px; display: flex; align-items: center; gap: 4px; z-index: 3; }
.watermark span { font: 300 28px/40px "Open Sans", "Noto Sans", sans-serif; color: #fff; text-shadow: 1px 1px 0 #8c8c8c; }

/* sheet tabs */
.sheets { display: flex; height: 20px; border-bottom: 1px solid #cfcfcf; font-size: 11px; color: #444; }
.arrows { display: flex; gap: 15px; padding: 0 29px 0 18px; opacity: .35; }
.tab { width: 45px; height: 17px; }
.tab.first { border-left: 1px solid #aaa; }
.tab.cur { background: #fff; color: #217346; height: 18px; border-bottom: 2px solid #217346; }
.tab.third { border-right: 1px solid #aaa; }
.add { margin-left: 22px; }
.hscroll { display: flex; align-items: center; width: 432px; margin-left: auto; padding-right: 15px; }
.hscroll .grip { margin: 0 11px 0 0; }
.hscroll .thumb { flex: 354; height: 12px; background: #fff; border: 1px solid #bdbdbd; }
.hscroll .track { flex: 25; height: 12px; background: #dadada; }

/* status bar */
.status { display: flex; align-items: center; height: 18px; background: #f3f3f3; padding: 0 12px 0 5px; }
.count { margin: 0 14px 0 auto; }
.view { width: 28px; height: 18px; }
.view.on { background: #c6c6c6; }
.zoom { width: 12px; font-size: 14px; margin-left: 1px; }
.status input { width: 82px; height: 12px; appearance: none; background: linear-gradient(#b5b5b5, #b5b5b5) center / 100% 1px no-repeat; }
.status input::-webkit-slider-thumb { appearance: none; width: 4px; height: 10px; background: #666; }
.pc { width: 28px; margin-left: 5px; }
```
